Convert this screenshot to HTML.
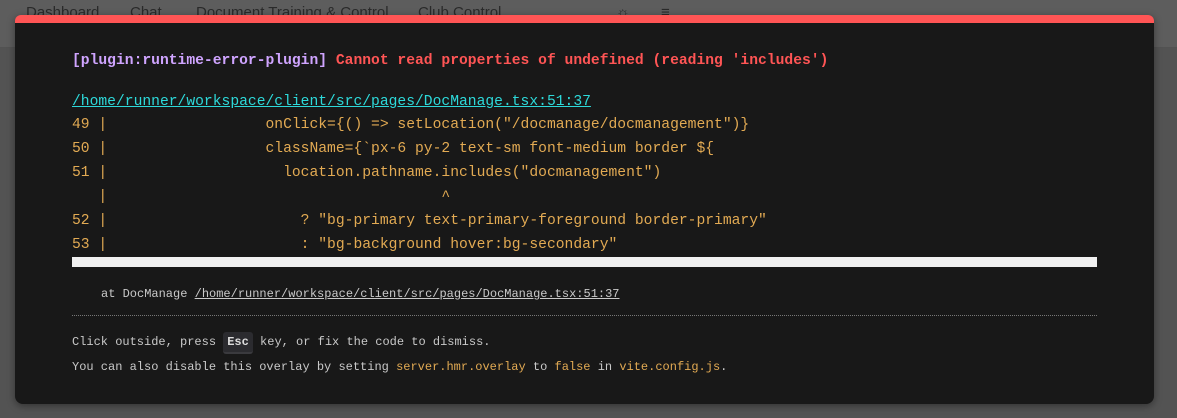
<!DOCTYPE html>
<html><head><meta charset="utf-8"><style>
html,body{margin:0;padding:0;width:1177px;height:418px;overflow:hidden;background:#535353;font-family:"Liberation Mono",monospace}
.nav{position:absolute;left:0;top:0;width:1177px;height:47px;background:#5d5d5d;border-bottom:1px solid #525252;font-family:"Liberation Sans",sans-serif;font-size:15px;color:#2a2a2a}
.nav span{position:absolute;top:4px}
.win{position:absolute;left:15px;top:15px;width:1139px;height:389px;background:#181818;border-top:8px solid #ff5555;border-radius:6px 6px 8px 8px;box-sizing:border-box;box-shadow:0 2px 8px rgba(0,0,0,.4)}
.t{position:absolute;white-space:pre;font-size:14.67px;line-height:24px}
.msg{font-weight:bold;color:#ff5555}
.pl{color:#cfa4ff}
.file{color:#2dd9da;text-decoration:underline}
.code{color:#e2aa53}
.dim{color:#c9c9c9;font-size:12px}
.y{color:#e2aa53}
.sb{position:absolute;left:57px;top:234px;width:1025px;height:10px;background:#f0f0f0}
.hr{position:absolute;left:57px;top:292px;width:1025px;border-top:1px dotted #777}
.kbd{display:inline-block;background:#2b2b2f;border-radius:3px;border-bottom:2px solid #3a3a3e;padding:0 4px;line-height:20px;font-weight:bold;color:#ddd}
</style></head><body>
<div class="nav"><span style="left:26px">Dashboard</span><span style="left:130px">Chat</span><span style="left:196px">Document Training &amp; Control</span><span style="left:418px">Club Control</span><span style="left:616px">☼</span><span style="left:661px">≡</span></div>
<div class="win">
<div class="t msg" style="left:57px;top:26px"><span class="pl">[plugin:runtime-error-plugin]</span> Cannot read properties of undefined (reading 'includes')</div>
<div class="t file" style="left:57px;top:67px">/home/runner/workspace/client/src/pages/DocManage.tsx:51:37</div>
<div class="t code" style="left:57px;top:90px">49 |                  onClick={() =&gt; setLocation("/docmanage/docmanagement")}
50 |                  className={`px-6 py-2 text-sm font-medium border ${
51 |                    location.pathname.includes("docmanagement")
   |                                      ^
52 |                      ? "bg-primary text-primary-foreground border-primary"
53 |                      : "bg-background hover:bg-secondary"</div>
<div class="sb"></div>
<div class="t dim" style="left:86px;top:259px">at DocManage <u>/home/runner/workspace/client/src/pages/DocManage.tsx:51:37</u></div>
<div class="hr"></div>
<div class="t dim" style="left:57px;top:307px">Click outside, press <span class="kbd">Esc</span> key, or fix the code to dismiss.</div>
<div class="t dim" style="left:57px;top:332px">You can also disable this overlay by setting <span class="y">server.hmr.overlay</span> to <span class="y">false</span> in <span class="y">vite.config.js</span>.</div>
</div>
</body></html>
